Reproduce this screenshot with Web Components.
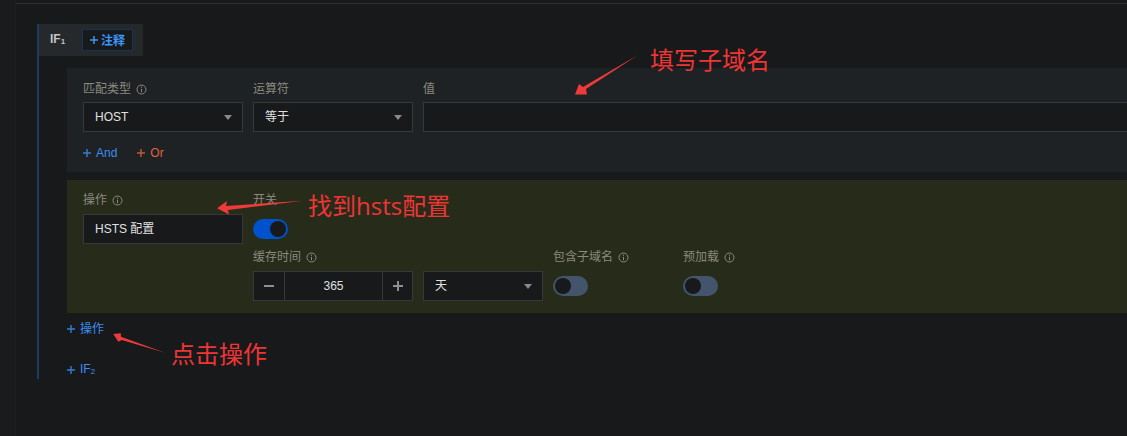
<!DOCTYPE html>
<html><head><meta charset="utf-8">
<style>
html,body{margin:0;padding:0;background:#18191b;height:436px;width:1127px;overflow:hidden;font-family:"Liberation Sans","Noto Sans CJK SC",sans-serif}
</style></head><body>
<rule-page>
  <if-block></if-block>
</rule-page>
<script>
const FONT='"Open Sans","Noto Sans CJK SC",sans-serif';
const info='<svg width="11" height="11" viewBox="0 0 11 11" fill="none" stroke="#8a8a80" stroke-width="1"><circle cx="5.5" cy="5.5" r="4.5"/><path d="M5.5 4.8V8.2M5.5 2.6V3.8"/></svg>';
function def(name,html){customElements.define(name,class extends HTMLElement{constructor(){super();const r=this.attachShadow({mode:'open'});r.innerHTML=html;}})}

def('rule-page',`<style>:host{display:block;position:relative;width:1127px;height:436px;box-sizing:border-box;padding:3px 0 0 16px;overflow:hidden}
.top{height:1px;background:#2e2f31;margin-bottom:20px}
.side{position:absolute;left:0;top:0;bottom:0;width:16px;border-right:1px solid #1e1f21;box-sizing:border-box;background:#1a1b1d}
</style><div class="side"></div><div class="top"></div><div style="padding-left:21px"><slot></slot></div>`);

def('field-label',`<style>:host{display:flex;align-items:center;gap:5px;height:16px;font-size:12px;color:#8a8a7f;line-height:16px;margin-bottom:var(--lb,6px)}</style><slot></slot>`);
def('info-icon',`<style>:host{display:inline-flex;width:11px;height:11px}</style>`+info);
def('select-box',`<style>:host{display:flex;align-items:center;box-sizing:border-box;height:30px;border:1px solid #37383a;background:#18191b;color:#e0e0e0;font-size:12px;line-height:16px;padding:0 10px 0 11px;justify-content:space-between}
span{display:block;height:16px;margin-top:-1px}
i{width:0;height:0;border:4px solid transparent;border-top:5px solid #8a8a8a;border-bottom:0}</style><span><slot></slot></span><i part="caret"></i>`);
def('text-box',`<style>:host{display:flex;align-items:center;box-sizing:border-box;height:30px;border:1px solid #37383a;background:#18191b;color:#e0e0e0;font-size:12px;line-height:16px;padding:0 11px}
span{display:block;height:16px;margin-top:-1px}</style><span><slot></slot></span>`);
def('toggle-switch',`<style>:host{display:block;width:35px;height:20px;border-radius:10px;background:#44546c;position:relative}
:host([on]){background:#0052cc}
b{position:absolute;top:2px;left:2px;width:16px;height:16px;border-radius:50%;background:#18191b}
:host([on]) b{left:17px}</style><b></b>`);
def('num-stepper',`<style>:host{display:flex;box-sizing:border-box;width:160px;height:30px;border:1px solid #37383a;background:#18191b;color:#e0e0e0;font-size:12px}
span{display:flex;align-items:center;justify-content:center}
.b{width:30px;flex:none}.b.p{width:29px}.v{flex:1;border-left:1px solid #37383a;border-right:1px solid #37383a}
</style><span class="b"><svg width="12" height="12" viewBox="0 0 12 12"><path d="M1 6h10" stroke="#8f8f8f" stroke-width="2"/></svg></span><span class="v"><slot></slot></span><span class="b p"><svg width="12" height="12" viewBox="0 0 12 12"><path d="M1 6h10M6 1v10" stroke="#8f8f8f" stroke-width="2"/></svg></span>`);
def('add-link',`<style>:host{display:inline-flex;align-items:center;gap:5px;font-size:12px;color:#3b8ef2;line-height:16px}
:host([tone=or]){color:#e0633f}
svg{stroke:currentColor;opacity:.85}
</style><svg width="8" height="8" viewBox="0 0 8 8"><path d="M0 4h8M4 0v8" stroke-width="1.4"/></svg><span><slot></slot></span>`);
def('field-col',`<style>:host{display:flex;flex-direction:column;width:var(--w,160px);flex:none}</style><slot></slot>`);
def('note-button',`<style>:host{display:inline-flex;align-items:center;justify-content:center;gap:3px;box-sizing:border-box;width:51px;height:22px;border:1px solid #17355c;background:#18191b;color:#3d95f5;font-size:12px;font-weight:700;line-height:16px}
span{display:block;height:16px;margin-top:2px}
svg{stroke:currentColor}</style><svg width="8" height="8" viewBox="0 0 8 8"><path d="M0 4h8M4 0v8" stroke-width="1.5"/></svg><span><slot></slot></span>`);
def('if-head',`<style>:host{display:flex;align-items:center;box-sizing:border-box;width:104px;height:32px;background:#25292c;padding-left:11px;color:#c4c4c4;font-size:12px;font-weight:700;gap:17px}.t{margin-top:-3px}sub{font-size:8px;vertical-align:baseline;position:relative;top:1px}</style><span class="t">IF<sub>1</sub></span><note-button>注释</note-button>`);
def('match-panel',`<style>:host{display:block;box-sizing:border-box;height:104px;background:#1e2224;padding:13px 0 0 16px;margin-left:28px;--lb:5px}
.r{display:flex;gap:10px}.l{display:flex;gap:20px;margin-top:13px}</style>
<div class="r"><field-col><field-label>匹配类型<info-icon></info-icon></field-label><select-box>HOST</select-box></field-col>
<field-col><field-label>运算符</field-label><select-box>等于</select-box></field-col>
<field-col style="--w:760px"><field-label>值</field-label><text-box></text-box></field-col></div>
<div class="l"><add-link>And</add-link><add-link tone="or">Or</add-link></div>`);
def('action-panel',`<style>:host{display:flex;gap:10px;box-sizing:border-box;height:133px;background:#272b1a;padding:12px 0 0 16px;margin:8px 0 0 28px}
.c{display:flex;flex-direction:column}
.g{display:flex;gap:10px;margin-top:10px}
toggle-switch{margin-top:5px}
</style>
<field-col><field-label>操作<info-icon></info-icon></field-label><text-box>HSTS 配置</text-box></field-col>
<div class="c"><field-col><field-label>开关</field-label><toggle-switch on></toggle-switch></field-col>
<div class="g"><field-col><field-label>缓存时间<info-icon></info-icon></field-label><num-stepper>365</num-stepper></field-col>
<field-col style="--w:120px"><field-label>&nbsp;</field-label><select-box>天</select-box></field-col>
<field-col style="--w:120px"><field-label>包含子域名<info-icon></info-icon></field-label><toggle-switch></toggle-switch></field-col>
<field-col style="--w:100px"><field-label>预加载<info-icon></info-icon></field-label><toggle-switch></toggle-switch></field-col></div></div>`);
def('note-arrow',`<style>:host{position:absolute;left:0;top:0;width:1127px;height:436px;pointer-events:none;color:#ee3535;font-size:24px;font-family:${FONT}}
span{position:absolute;line-height:32px;white-space:nowrap}
svg{position:absolute;left:0;top:0}
</style><svg width="1127" height="436" fill="#f03a3a"><path d="M638 55L586 89 587 94.5 575 94.5 579 84 583 87Z"/><path d="M303 200.7L226 206 227 201 217 208.3 229 214.5 228 210Z"/><path d="M165 352.7L121 336.7 120.7 333.3 113.3 334 118.3 341.7 121.7 340Z"/></svg>
<span style="left:650px;top:44px">填写子域名</span><span style="left:308px;top:190px">找到hsts配置</span><span style="left:171px;top:338px">点击操作</span>`);
def('if-block',`<style>:host{display:block;position:relative;border-left:2px solid #1d3a63;height:355px;box-sizing:border-box;width:1100px}
</style><if-head></if-head><div style="height:12px"></div><match-panel></match-panel><action-panel></action-panel>
<div style="margin:6px 0 0 28px"><add-link>操作</add-link></div>
<div style="margin:23px 0 0 28px"><add-link>IF<sub style="font-size:8px;vertical-align:baseline;position:relative;top:1px">2</sub></add-link></div>`);
document.body.appendChild(document.createElement('note-arrow'));
</script>
</body></html>
